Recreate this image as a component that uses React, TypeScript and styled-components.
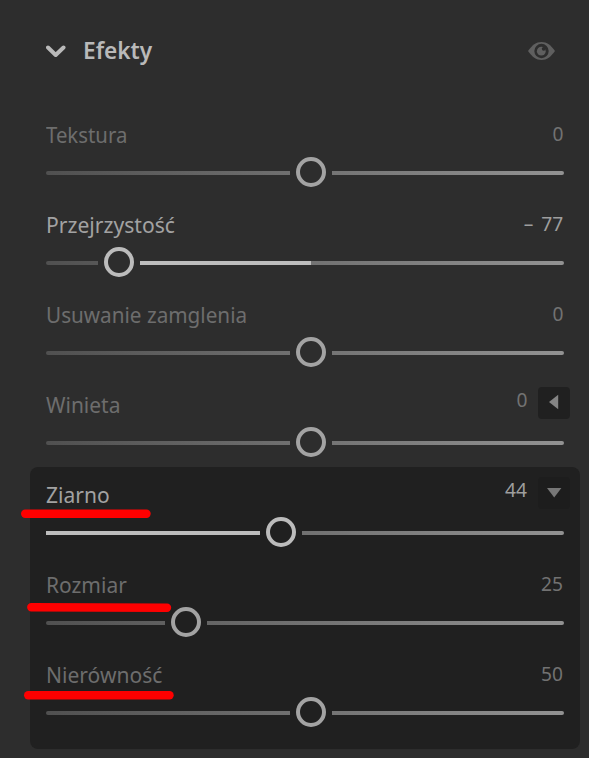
import React from "react";
import styled, { createGlobalStyle } from "styled-components";

const GlobalStyle = createGlobalStyle`
  *, *::before { box-sizing: border-box; }
  body { margin: 0; background: #2d2d2d; }
`;

const Panel = styled.main`
  width: 589px;
  height: 758px;
  overflow: hidden;
  position: relative;
  background: #2d2d2d;
  font-family: "Noto Sans", "Open Sans", sans-serif;
`;

const Header = styled.header`
  display: flex;
  align-items: center;
  height: 107px;
  padding: 0 34px 5px 46px;
`;

const Chevron = styled.svg`
  width: 20px;
  height: 14px;
  margin-right: 17px;
`;

const Title = styled.h2<{ $fit: number }>`
  flex: 1;
  margin: 0;
  padding-bottom: 2px;
  color: #b9b9b9;
  font-size: 23px;
  line-height: 32px;
  font-weight: 600;
  white-space: nowrap;
  transform: scaleX(${(p) => p.$fit});
  transform-origin: left;
`;

const Eye = styled.svg`
  width: 27px;
  height: 18px;
`;

const Row = styled.section`
  height: 90px;
  padding: 0 25px 0 46px;
`;

const Line = styled.div`
  display: flex;
  justify-content: space-between;
  height: 50px;
`;

const Label = styled.span<{ $active?: boolean; $fit: number }>`
  margin-top: 12px;
  height: 30px;
  line-height: 30px;
  font-size: 22px;
  white-space: nowrap;
  color: ${(p) => (p.$active ? "#a2a2a2" : "#6d6d6d")};
  transform: scaleX(${(p) => p.$fit});
  transform-origin: left;
`;

const Side = styled.div<{ $button: boolean }>`
  display: flex;
  align-items: flex-start;
  gap: 10px;
  margin-right: ${(p) => (p.$button ? "-6px" : "0")};
  padding-top: ${(p) => (p.$button ? "10px" : "12px")};
`;

const Value = styled.span<{ $active?: boolean; $button: boolean }>`
  line-height: 30px;
  margin-top: ${(p) => (p.$button ? "-2px" : "0")};
  padding-right: 1px;
  font-size: 20px;
  word-spacing: 3px;
  white-space: nowrap;
  color: ${(p) => (p.$active ? "#9e9e9e" : "#727272")};
  transform: scaleX(0.96);
  transform-origin: right;
`;

const Toggle = styled.button<{ $open: boolean }>`
  width: 32px;
  height: 32px;
  padding: 0;
  border: 0;
  border-radius: 4px;
  display: grid;
  place-items: center;
  background: ${(p) => (p.$open ? "#1d1d1d" : "#202020")};
`;

const Track = styled.div`
  display: grid;
  align-items: center;
  height: 30px;
  width: 518px;
`;

const Rail = styled.div<{ $from?: number; $to?: number }>`
  grid-area: 1 / 1;
  height: 4px;
  margin-top: 2px;
  border-radius: ${(p) => (p.$from === 0 ? "0 2px 2px 0" : "2px")};
  background: ${(p) =>
    p.$from === undefined
      ? "linear-gradient(90deg, #505050, #929292)"
      : `linear-gradient(90deg, transparent ${p.$from}px, #bdbdbd ${p.$from}px ${p.$to}px, transparent ${p.$to}px),
         linear-gradient(90deg, #505050, #929292)`};
`;

const Knob = styled.div<{ $at: number; $active?: boolean; $surface: string }>`
  grid-area: 1 / 1;
  width: 42px;
  height: 30px;
  margin-left: ${(p) => p.$at - 21}px;
  display: grid;
  place-items: center;
  background: ${(p) => p.$surface};
  z-index: 1;

  &::before {
    content: "";
    width: 30px;
    height: 30px;
    border: 4px solid ${(p) => (p.$active ? "#bcbcbc" : "#a3a3a3")};
    border-radius: 50%;
  }
`;

const Group = styled.div`
  width: 550px;
  height: 282px;
  margin-left: 30px;
  border-radius: 8px;
  background: #202020;

  ${Row} {
    padding: 0 16px;
  }
`;

const Marks = styled.svg`
  position: absolute;
  inset: 0;
  width: 589px;
  height: 758px;
  pointer-events: none;
  z-index: 2;
`;

type SliderProps = {
  label: string;
  fit: number;
  value: string;
  at: number;
  active?: boolean;
  fill?: [number, number];
  toggle?: "open" | "closed";
  surface?: string;
};

function Slider({ label, fit, value, at, active, fill, toggle, surface = "#2d2d2d" }: SliderProps) {
  return (
    <Row>
      <Line>
        <Label $active={active} $fit={fit}>{label}</Label>
        <Side $button={!!toggle}>
          <Value $active={active} $button={!!toggle}>{value}</Value>
          {toggle && (
            <Toggle $open={toggle === "open"} aria-label={label}>
              <svg width="32" height="32" viewBox="0 0 32 32">
                <path
                  d={toggle === "open" ? "M9 11H23.4L16.2 20.6Z" : "M20.2 7.8V22.2L11 15Z"}
                  fill={toggle === "open" ? "#777" : "#858585"}
                />
              </svg>
            </Toggle>
          )}
        </Side>
      </Line>
      <Track>
        <Rail $from={fill?.[0]} $to={fill?.[1]} />
        <Knob $at={at} $active={active} $surface={surface} />
      </Track>
    </Row>
  );
}

export default function App() {
  return (
    <Panel>
      <GlobalStyle />
      <Header>
        <Chevron viewBox="0 0 20 14">
          <path d="M2 3.5L9.7 11L17.5 3.5" fill="none" stroke="#b9b9b9" strokeWidth="4" strokeLinecap="round" strokeLinejoin="round" />
        </Chevron>
        <Title $fit={0.985}>Efekty</Title>
        <Eye viewBox="0 0 27 18">
          <path d="M0 9C4 3.2 8.3 0 13.5 0S23 3.2 27 9C23 14.8 18.7 18 13.5 18S4 14.8 0 9Z" fill="#5f5f5f" />
          <circle cx="13.5" cy="9" r="7.2" fill="#2d2d2d" />
          <circle cx="13.3" cy="9.2" r="4.4" fill="#5f5f5f" />
          <circle cx="15.7" cy="6.8" r="1.9" fill="#2d2d2d" />
        </Eye>
      </Header>
      <Slider label="Tekstura" fit={0.925} value="0" at={265} />
      <Slider label="Przejrzystość" fit={0.96} value="– 77" at={73} active fill={[73, 265]} />
      <Slider label="Usuwanie zamglenia" fit={0.941} value="0" at={265} />
      <Slider label="Winieta" fit={0.953} value="0" at={265} toggle="closed" />
      <Group>
        <Slider label="Ziarno" fit={0.955} value="44" at={235} active fill={[0, 235]} toggle="open" surface="#202020" />
        <Slider label="Rozmiar" fit={0.953} value="25" at={140.3} surface="#202020" />
        <Slider label="Nierówność" fit={0.957} value="50" at={265} surface="#202020" />
      </Group>
      <Marks viewBox="0 0 589 758" fill="none" stroke="#fe0000" strokeWidth="8.4" strokeLinecap="round">
        <path d="M25.2 513.8H146.5" />
        <path d="M31.3 607.2L167 607.8" />
        <path d="M28.2 695.3H169.5" />
      </Marks>
    </Panel>
  );
}
